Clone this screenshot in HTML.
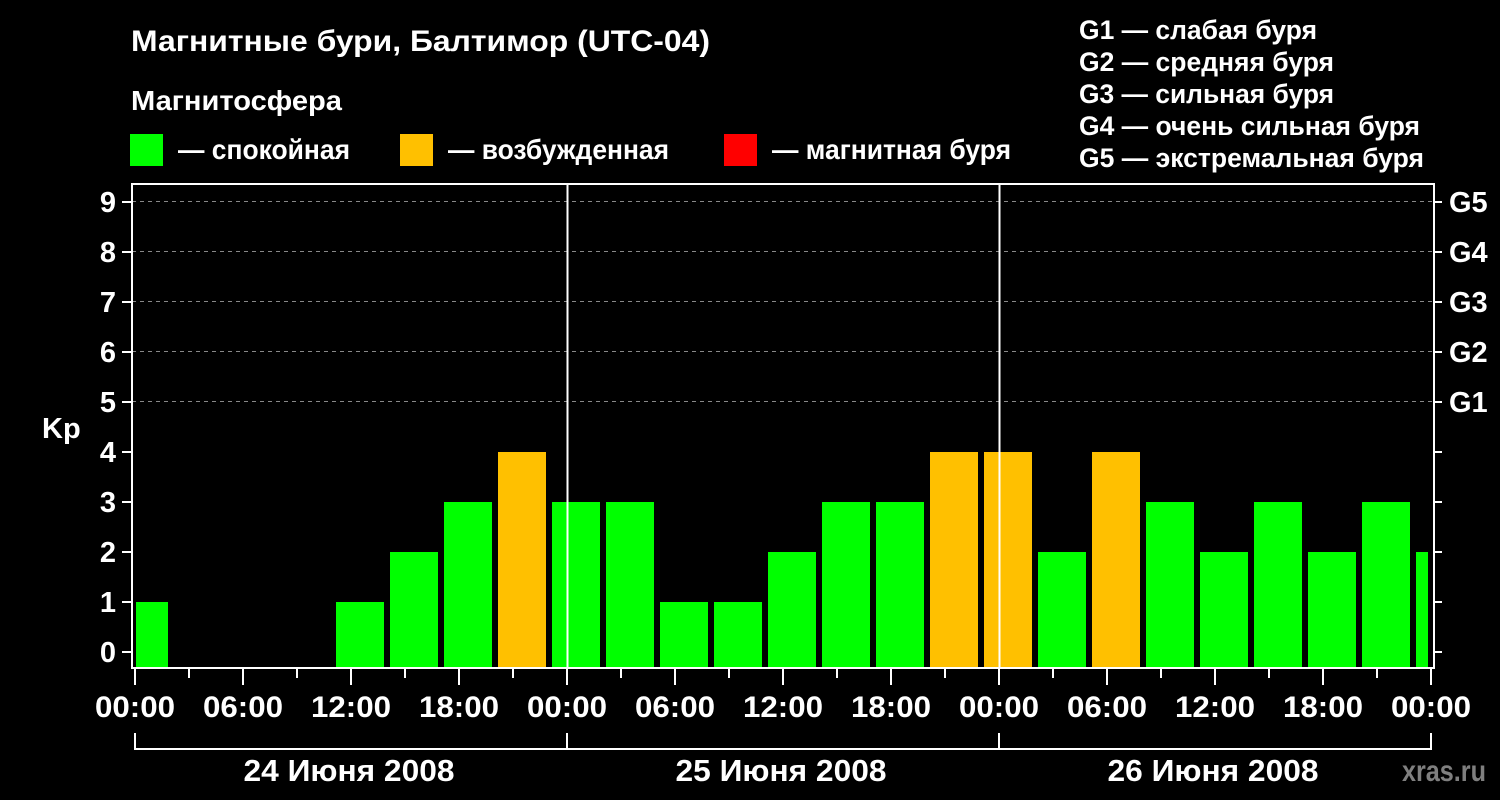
<!DOCTYPE html>
<html><head><meta charset="utf-8"><style>
html,body{margin:0;padding:0;background:#000;width:1500px;height:800px;overflow:hidden}
svg{display:block}
text{font-family:"Liberation Sans",Arial,sans-serif;font-weight:bold;fill:#fff}
</style></head><body>
<svg width="1500" height="800" viewBox="0 0 1500 800" xmlns="http://www.w3.org/2000/svg">
<rect width="1500" height="800" fill="#000"/>
<text x="131" y="51" font-size="30" textLength="579" lengthAdjust="spacingAndGlyphs">Магнитные бури, Балтимор (UTC-04)</text>
<text x="131" y="110" font-size="28" textLength="211" lengthAdjust="spacingAndGlyphs">Магнитосфера</text>
<rect x="130" y="134" width="33" height="32" fill="#00ff00"/>
<text x="178" y="159" font-size="28" textLength="172" lengthAdjust="spacingAndGlyphs">— спокойная</text>
<rect x="400" y="134" width="33" height="32" fill="#ffc000"/>
<text x="448" y="159" font-size="28" textLength="221" lengthAdjust="spacingAndGlyphs">— возбужденная</text>
<rect x="724" y="134" width="33" height="32" fill="#ff0000"/>
<text x="772" y="159" font-size="28" textLength="239" lengthAdjust="spacingAndGlyphs">— магнитная буря</text>
<g font-size="27">
<text x="1079" y="39" textLength="238" lengthAdjust="spacingAndGlyphs">G1 — слабая буря</text>
<text x="1079" y="71" textLength="255" lengthAdjust="spacingAndGlyphs">G2 — средняя буря</text>
<text x="1079" y="103" textLength="255" lengthAdjust="spacingAndGlyphs">G3 — сильная буря</text>
<text x="1079" y="135" textLength="341" lengthAdjust="spacingAndGlyphs">G4 — очень сильная буря</text>
<text x="1079" y="167" textLength="345" lengthAdjust="spacingAndGlyphs">G5 — экстремальная буря</text>
</g>
<g stroke="#888" stroke-width="1" stroke-dasharray="4,4">
<line x1="132" y1="201.5" x2="1434" y2="201.5"/>
<line x1="132" y1="251.5" x2="1434" y2="251.5"/>
<line x1="132" y1="301.5" x2="1434" y2="301.5"/>
<line x1="132" y1="351.5" x2="1434" y2="351.5"/>
<line x1="132" y1="401.5" x2="1434" y2="401.5"/>
</g>
<g>
<rect x="136" y="602" width="32" height="66" fill="#00ff00"/>
<rect x="336" y="602" width="48" height="66" fill="#00ff00"/>
<rect x="390" y="552" width="48" height="116" fill="#00ff00"/>
<rect x="444" y="502" width="48" height="166" fill="#00ff00"/>
<rect x="498" y="452" width="48" height="216" fill="#ffc000"/>
<rect x="552" y="502" width="48" height="166" fill="#00ff00"/>
<rect x="606" y="502" width="48" height="166" fill="#00ff00"/>
<rect x="660" y="602" width="48" height="66" fill="#00ff00"/>
<rect x="714" y="602" width="48" height="66" fill="#00ff00"/>
<rect x="768" y="552" width="48" height="116" fill="#00ff00"/>
<rect x="822" y="502" width="48" height="166" fill="#00ff00"/>
<rect x="876" y="502" width="48" height="166" fill="#00ff00"/>
<rect x="930" y="452" width="48" height="216" fill="#ffc000"/>
<rect x="984" y="452" width="48" height="216" fill="#ffc000"/>
<rect x="1038" y="552" width="48" height="116" fill="#00ff00"/>
<rect x="1092" y="452" width="48" height="216" fill="#ffc000"/>
<rect x="1146" y="502" width="48" height="166" fill="#00ff00"/>
<rect x="1200" y="552" width="48" height="116" fill="#00ff00"/>
<rect x="1254" y="502" width="48" height="166" fill="#00ff00"/>
<rect x="1308" y="552" width="48" height="116" fill="#00ff00"/>
<rect x="1362" y="502" width="48" height="166" fill="#00ff00"/>
<rect x="1416" y="552" width="12" height="116" fill="#00ff00"/>
</g>
<line x1="567.5" y1="183" x2="567.5" y2="668" stroke="#fff" stroke-width="2"/>
<line x1="999.5" y1="183" x2="999.5" y2="668" stroke="#fff" stroke-width="2"/>
<rect x="132" y="184" width="1302" height="484" fill="none" stroke="#fff" stroke-width="2"/>
<g stroke="#fff" stroke-width="2">
<line x1="122" y1="202" x2="132" y2="202"/><line x1="122" y1="252" x2="132" y2="252"/>
<line x1="122" y1="302" x2="132" y2="302"/><line x1="122" y1="352" x2="132" y2="352"/>
<line x1="122" y1="402" x2="132" y2="402"/><line x1="122" y1="452" x2="132" y2="452"/>
<line x1="122" y1="502" x2="132" y2="502"/><line x1="122" y1="552" x2="132" y2="552"/>
<line x1="122" y1="602" x2="132" y2="602"/><line x1="122" y1="652" x2="132" y2="652"/>
<line x1="1434" y1="202" x2="1442" y2="202"/><line x1="1434" y1="252" x2="1442" y2="252"/>
<line x1="1434" y1="302" x2="1442" y2="302"/><line x1="1434" y1="352" x2="1442" y2="352"/>
<line x1="1434" y1="402" x2="1442" y2="402"/><line x1="1434" y1="452" x2="1442" y2="452"/>
<line x1="1434" y1="502" x2="1442" y2="502"/><line x1="1434" y1="552" x2="1442" y2="552"/>
<line x1="1434" y1="602" x2="1442" y2="602"/><line x1="1434" y1="652" x2="1442" y2="652"/>
</g>
<g font-size="29" text-anchor="end">
<text x="116" y="212">9</text><text x="116" y="262">8</text><text x="116" y="312">7</text>
<text x="116" y="362">6</text><text x="116" y="412">5</text><text x="116" y="462">4</text>
<text x="116" y="512">3</text><text x="116" y="562">2</text><text x="116" y="612">1</text>
<text x="116" y="662">0</text>
</g>
<text x="42" y="438" font-size="29">Kp</text>
<g font-size="29">
<text x="1449" y="212">G5</text><text x="1449" y="262">G4</text><text x="1449" y="312">G3</text>
<text x="1449" y="362">G2</text><text x="1449" y="412">G1</text>
</g>
<g stroke="#fff" stroke-width="2">
<line x1="135" y1="668" x2="135" y2="685"/><line x1="189" y1="668" x2="189" y2="678"/>
<line x1="243" y1="668" x2="243" y2="685"/><line x1="297" y1="668" x2="297" y2="678"/>
<line x1="351" y1="668" x2="351" y2="685"/><line x1="405" y1="668" x2="405" y2="678"/>
<line x1="459" y1="668" x2="459" y2="685"/><line x1="513" y1="668" x2="513" y2="678"/>
<line x1="567" y1="668" x2="567" y2="685"/><line x1="621" y1="668" x2="621" y2="678"/>
<line x1="675" y1="668" x2="675" y2="685"/><line x1="729" y1="668" x2="729" y2="678"/>
<line x1="783" y1="668" x2="783" y2="685"/><line x1="837" y1="668" x2="837" y2="678"/>
<line x1="891" y1="668" x2="891" y2="685"/><line x1="945" y1="668" x2="945" y2="678"/>
<line x1="999" y1="668" x2="999" y2="685"/><line x1="1053" y1="668" x2="1053" y2="678"/>
<line x1="1107" y1="668" x2="1107" y2="685"/><line x1="1161" y1="668" x2="1161" y2="678"/>
<line x1="1215" y1="668" x2="1215" y2="685"/><line x1="1269" y1="668" x2="1269" y2="678"/>
<line x1="1323" y1="668" x2="1323" y2="685"/><line x1="1377" y1="668" x2="1377" y2="678"/>
<line x1="1431" y1="668" x2="1431" y2="685"/>
</g>
<g font-size="30" text-anchor="middle">
<text x="135" y="717" textLength="80" lengthAdjust="spacingAndGlyphs">00:00</text><text x="243" y="717" textLength="80" lengthAdjust="spacingAndGlyphs">06:00</text><text x="351" y="717" textLength="80" lengthAdjust="spacingAndGlyphs">12:00</text>
<text x="459" y="717" textLength="80" lengthAdjust="spacingAndGlyphs">18:00</text><text x="567" y="717" textLength="80" lengthAdjust="spacingAndGlyphs">00:00</text><text x="675" y="717" textLength="80" lengthAdjust="spacingAndGlyphs">06:00</text>
<text x="783" y="717" textLength="80" lengthAdjust="spacingAndGlyphs">12:00</text><text x="891" y="717" textLength="80" lengthAdjust="spacingAndGlyphs">18:00</text><text x="999" y="717" textLength="80" lengthAdjust="spacingAndGlyphs">00:00</text>
<text x="1107" y="717" textLength="80" lengthAdjust="spacingAndGlyphs">06:00</text><text x="1215" y="717" textLength="80" lengthAdjust="spacingAndGlyphs">12:00</text><text x="1323" y="717" textLength="80" lengthAdjust="spacingAndGlyphs">18:00</text>
<text x="1431" y="717" textLength="80" lengthAdjust="spacingAndGlyphs">00:00</text>
</g>
<polyline points="135,733 135,749 1431,749 1431,733" fill="none" stroke="#fff" stroke-width="2"/>
<line x1="567" y1="733" x2="567" y2="749" stroke="#fff" stroke-width="2"/>
<line x1="999" y1="733" x2="999" y2="749" stroke="#fff" stroke-width="2"/>
<g font-size="31" text-anchor="middle">
<text x="349" y="781" textLength="211" lengthAdjust="spacingAndGlyphs">24 Июня 2008</text>
<text x="781" y="781" textLength="211" lengthAdjust="spacingAndGlyphs">25 Июня 2008</text>
<text x="1213" y="781" textLength="211" lengthAdjust="spacingAndGlyphs">26 Июня 2008</text>
</g>
<text x="1402" y="781" font-size="30" textLength="84" lengthAdjust="spacingAndGlyphs" style="fill:#7f7f7f">xras.ru</text>
</svg>
</body></html>
